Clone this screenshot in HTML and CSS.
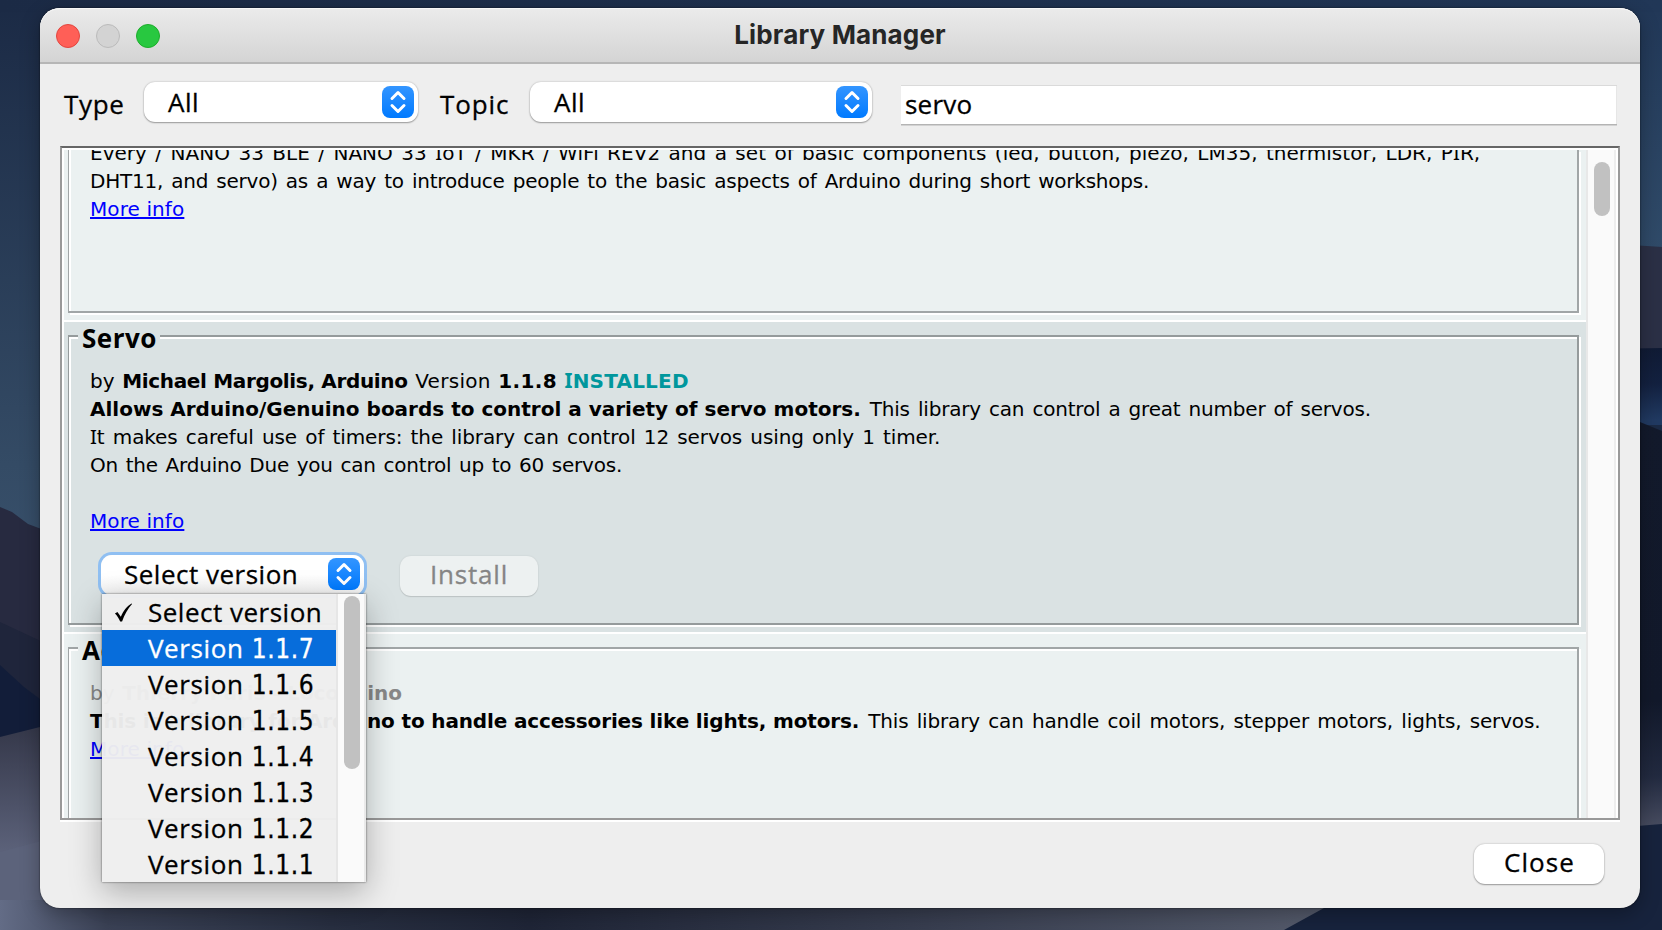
FILE: index.html
```html
<!DOCTYPE html>
<html lang="en">
<head>
<meta charset="utf-8">
<title>Library Manager</title>
<link rel="stylesheet" href="styles.css">
</head>
<body>
<svg class="wallpaper" viewBox="0 0 1662 930" preserveAspectRatio="none" aria-hidden="true">
  <defs>
    <linearGradient id="sky" x1="0" y1="0" x2="0" y2="1">
      <stop offset="0" stop-color="#1b2a45"/><stop offset=".5" stop-color="#344b65"/><stop offset="1" stop-color="#476280"/>
    </linearGradient>
    <linearGradient id="skyRight" x1="0" y1="0" x2="0" y2="1">
      <stop offset="0" stop-color="#213757"/><stop offset="1" stop-color="#304b69"/>
    </linearGradient>
    <linearGradient id="skyTop" x1="0" y1="0" x2="1" y2="0">
      <stop offset="0" stop-color="#1b2a45"/><stop offset="1" stop-color="#213757"/>
    </linearGradient>
    <linearGradient id="dune" x1="0" y1="725" x2="0" y2="850" gradientUnits="userSpaceOnUse">
      <stop offset="0" stop-color="#343749"/><stop offset="1" stop-color="#5b6179"/>
    </linearGradient>
    <linearGradient id="floor" x1="0" y1="0" x2="1324" y2="0" gradientUnits="userSpaceOnUse">
      <stop offset="0" stop-color="#636c86"/><stop offset=".08" stop-color="#3b4256"/><stop offset=".25" stop-color="#282f41"/>
      <stop offset=".4" stop-color="#1f2537"/><stop offset=".7" stop-color="#383e50"/><stop offset="1" stop-color="#555b6c"/>
    </linearGradient>
    <linearGradient id="navy" x1="0" y1="348" x2="0" y2="420" gradientUnits="userSpaceOnUse">
      <stop offset="0" stop-color="#101b35"/><stop offset=".5" stop-color="#132140"/><stop offset="1" stop-color="#213a62"/>
    </linearGradient>
    <linearGradient id="shade" x1="0" y1="410" x2="0" y2="826" gradientUnits="userSpaceOnUse">
      <stop offset="0" stop-color="#131a2c"/><stop offset=".7" stop-color="#12192b"/><stop offset=".88" stop-color="#222a40"/><stop offset="1" stop-color="#474c60"/>
    </linearGradient>
  </defs>
  <rect width="831" height="930" fill="url(#sky)"/>
  <rect x="831" width="831" height="250" fill="url(#skyRight)"/>
  <rect width="1662" height="12" fill="url(#skyTop)"/>
  <path d="M0 507L12 512 28 524 60 536V930H0Z" fill="#272a40"/>
  <path d="M0 622L60 650V930H0Z" fill="#1f253b"/>
  <path d="M0 665L24 687 60 714V930H0Z" fill="#121d39"/>
  <path d="M0 737L60 722V930H0Z" fill="url(#dune)"/>
  <path d="M0 852L60 836V930H0Z" fill="#5c647c" opacity=".7"/>
  <rect y="900" width="1340" height="30" fill="url(#floor)"/>
  <path d="M1600 243L1662 247V350H1600Z" fill="#2b3046"/>
  <path d="M1600 349L1662 348V425H1600Z" fill="url(#navy)"/>
  <path d="M1600 408L1640 422 1662 431V830H1600Z" fill="url(#shade)"/>
  <path d="M1600 829L1662 824V930H1284L1324 908 1340 900H1600Z" fill="#17233d"/>
</svg>

<main class="window">
  <header class="titlebar">
    <div class="lights"><i class="light red"></i><i class="light off"></i><i class="light green"></i></div>
    <h1 class="title">Library Manager</h1>
  </header>

  <div class="filters">
    <span class="label type">Type</span>
    <div class="combo combo-type"><span>All</span>
      <svg class="stepper" viewBox="0 0 32 32"><path d="M10 12.500L16 6.500l6 6M10 19.500L16 25.500l6-6"/></svg></div>
    <span class="label topic">Topic</span>
    <div class="combo combo-topic"><span>All</span>
      <svg class="stepper" viewBox="0 0 32 32"><path d="M10 12.500L16 6.500l6 6M10 19.500L16 25.500l6-6"/></svg></div>
    <div class="search">servo</div>
  </div>

  <section class="pane">
    <div class="list">
      <article class="item clipped">
        <div class="frame">
          <div class="desc">
            <p class="l-every">Every / NANO 33 BLE / NANO 33 <span class="si">I</span>oT / MKR / WiFi REV2 and a set of basic components (led, button, piezo, LM35, thermistor, LDR, P<span class="si">I</span>R,</p>
            <p class="l-dht">DHT11, and servo) as a way to introduce people to the basic aspects of Arduino during short workshops.</p>
            <p><a>More info</a></p>
          </div>
        </div>
      </article>
      <article class="item selected">
        <div class="frame">
          <h2>Servo</h2>
          <div class="desc">
            <p class="byline">by <b class="author">Michael Margolis, Arduino</b> <span class="ver">Version</span> <b class="num">1.1.8</b> <b class="installed"><span class="si">I</span>NSTALLED</b></p>
            <p><b class="lead">Allows Arduino/Genuino boards to control a variety of servo motors.</b> <span class="tail">This library can control a great number of servos.</span></p>
            <p class="l-it"><span class="si">I</span>t makes careful use of timers: the library can control 12 servos using only 1 timer.</p>
            <p class="l-on">On the Arduino Due you can control up to 60 servos.</p>
            <p>&nbsp;</p>
            <p><a>More info</a></p>
          </div>
          <div class="actions">
            <div class="combo combo-version"><span>Select version</span>
              <svg class="stepper" viewBox="0 0 32 32"><path d="M10 12.500L16 6.500l6 6M10 19.500L16 25.500l6-6"/></svg></div>
            <div class="button install">Install</div>
          </div>
        </div>
      </article>
      <article class="item">
        <div class="frame">
          <h2>Accessories</h2>
          <div class="desc">
            <p class="byline muted">by <b class="author loco">Thierry Paris - Locoduino</b></p>
            <p><b class="lead3">This is a library for Arduino to handle accessories like lights, motors.</b> <span class="tail tail3">This library can handle coil motors, stepper motors, lights, servos.</span></p>
            <p><a>More info</a></p>
          </div>
        </div>
      </article>
    </div>
    <div class="scrollbar"><div class="thumb"></div></div>
  </section>

  <footer class="footer"><div class="button close">Close</div></footer>

  <div class="popup">
    <ul class="options">
      <li class="checked"><svg class="check" viewBox="0 0 20 20"><path d="M1 11L3.600 9.500 7.200 14.500C10 8 13 4 18.500.5L19 1C14.500 6 11 12 8.500 19.500H6.500C5 16 3.500 13.500 1 11Z"/></svg>Select version</li>
      <li class="active">Version <span class="digits">1.1.7</span></li>
      <li>Version <span class="digits">1.1.6</span></li>
      <li>Version <span class="digits">1.1.5</span></li>
      <li>Version <span class="digits">1.1.4</span></li>
      <li>Version <span class="digits">1.1.3</span></li>
      <li>Version <span class="digits">1.1.2</span></li>
      <li>Version <span class="digits">1.1.1</span></li>
    </ul>
    <div class="popup-track"><div class="popup-thumb"></div></div>
  </div>
</main>
</body>
</html>
```
FILE: styles.css
```css
* { box-sizing: border-box; margin: 0; padding: 0; }
body {
  width: 1662px; height: 930px; overflow: hidden;
  padding: 8px 22px 22px 40px;
  background: #1b2a45;
  font: 26px "Open Sans", sans-serif;
  letter-spacing: .5px;
  color: #000;
}
.wallpaper { position: absolute; left: 0; top: 0; width: 1662px; height: 930px; }

.window {
  position: relative;
  width: 1600px; height: 900px;
  display: flex; flex-direction: column;
  background: #eee;
  border-radius: 20px;
  box-shadow: 0 0 2px rgba(0,0,0,.7), 0 6px 20px rgba(0,0,0,.3);
}

.titlebar {
  height: 56px; flex: none;
  display: grid; grid-template-columns: 150px 1fr 150px; align-items: center;
  padding: 0 16px;
  border-radius: 20px 20px 0 0;
  background: linear-gradient(#ebebeb, #d4d4d4);
  border-bottom: 2px solid #b6b6b6;
  box-shadow: inset 0 1px 0 #f6f6f6;
}
.lights { display: flex; gap: 16px; }
.light { width: 24px; height: 24px; border-radius: 50%; border: 1px solid; margin-top: 2px; }
.red { background: #ff5f57; border-color: #e2463f; }
.off { background: #d3d3d3; border-color: #bbb; }
.green { background: #28c840; border-color: #1dad2b; }
.title {
  font: bold 26px/54px Inter, sans-serif; letter-spacing: .15px;
  color: #262626; text-align: center;
}

.label, .combo span, .button, .search, .options li { -webkit-text-stroke: .3px currentColor; }

.filters { height: 82px; flex: none; display: flex; padding: 18px 23px 0 24px; }
.label { line-height: 44px; height: 44px; }
.type { width: 80px; letter-spacing: .7px; }
.topic { width: 90px; margin-left: 22px; letter-spacing: .9px; }

.combo {
  display: flex; align-items: center; justify-content: space-between;
  height: 40px; padding: 0 4px 0 24px; line-height: 40px;
  background: #fff; border-radius: 11px;
  box-shadow: 0 0 2px rgba(0,0,0,.25), 0 1px 1.500px rgba(0,0,0,.3);
}
.combo span { height: 40px; }
.combo-type { width: 274px; }
.combo-topic { width: 342px; }
.stepper {
  width: 32px; height: 32px; border-radius: 8px;
  background: linear-gradient(#3395ff, #007aff);
  fill: none; stroke: #fff; stroke-width: 3; stroke-linecap: round; stroke-linejoin: round;
}
.search {
  flex: 1; margin: 4px 0 0 29px; height: 38px; padding-left: 4px; line-height: 36px; letter-spacing: .2px;
  background: #fff; border-right: 1px solid #e6e6e6;
  box-shadow: 0 -1px 0 #dadada, 0 1px 0 #b4b4b4, 0 2px 0 #d2d2d2;
}

.pane {
  flex: none; height: 674px; margin: 0 20px;
  display: flex;
  background: #fff; padding: 2px 2px 0;
  border: 2px solid #999; border-top-color: #666;
  box-shadow: 0 2px 0 #fff;
}
.list { width: 1522px; height: 668px; overflow: hidden; }
.item {
  height: 312px; padding: 13px 7px 7px 4px;
  background: #ebf1f1; border-bottom: 2px solid #fff;
}
.item.selected { background: #dae2e3; }
.item.clipped { height: 172px; padding-top: 0; }
.frame {
  display: flow-root;
  height: 290px;
  border: 2px solid #a1a6a7; border-left-width: 1px;
  box-shadow: 2px 2px 0 #fff, inset 2px 2px 0 #fff;
}
.selected .frame { border-color: #959b9c; }
.clipped .frame { height: 163px; border-top: 0; box-shadow: 2px 2px 0 #fff, inset 2px 0 0 #fff; }
.frame h2 {
  width: max-content; height: 30px; line-height: 28px;
  margin: -13px 0 13px 9px; padding: 0 3px 0 4px;
  font-size: 26px; letter-spacing: .5px; background: #ebf1f1;
}
.selected h2 { background: #dae2e3; }

.desc { padding-left: 21px; font-family: "DejaVu Sans", sans-serif; font-size: 20px; line-height: 28px; letter-spacing: .1px; white-space: nowrap; }
.clipped .desc { margin-top: -11px; }
.desc p { height: 28px; }
.si { font-family: "Noto Sans", sans-serif; font-size: 20.500px; line-height: 1; }
.desc a { color: #0000ff; text-decoration: underline; text-decoration-thickness: 2px; text-underline-offset: 1px; }
.byline { word-spacing: 1px; }
.author { letter-spacing: -.34px; word-spacing: 0; }
.loco { letter-spacing: -.09px; }
.ver { letter-spacing: .3px; }
.num { letter-spacing: .35px; }
.lead { letter-spacing: 0; }
.lead3 { letter-spacing: -.15px; }
.tail { margin-left: 2.500px; letter-spacing: -.21px; word-spacing: 2px; }
.tail3 { letter-spacing: -.14px; }
.l-every { letter-spacing: .03px; word-spacing: 2px; }
.l-dht { letter-spacing: -.23px; word-spacing: 2px; }
.l-it { letter-spacing: -.11px; word-spacing: 2px; }
.l-on { letter-spacing: -.2px; word-spacing: 1.500px; }
.installed { color: #00979d; letter-spacing: .2px; }
.muted { color: #888; }

.actions { display: flex; gap: 36px; padding: 20px 0 0 32px; }
.combo-version {
  width: 263px; padding-left: 23px; line-height: 38px;
  background: linear-gradient(#fff 50%, #f0f0f0);
  box-shadow: 0 0 0 3px #8fbff2;
}
.combo-version .stepper { margin-top: -2px; }
.button {
  height: 40px; line-height: 36px; border-radius: 11px; text-align: center; background: #fff;
  box-shadow: 0 0 2px rgba(0,0,0,.25), 0 1px 1.500px rgba(0,0,0,.3);
}
.install { width: 138px; margin-top: 1px; letter-spacing: .8px; background: #edf1f1; color: #858585; box-shadow: 0 0 2px rgba(0,0,0,.1), 0 1px 1px rgba(0,0,0,.12); }

.scrollbar {
  width: 30px; padding: 12px 0 0 6px; background: #fafafa;
  border-left: 2px solid #e8e8e8; border-right: 2px solid #ededed;
}
.thumb { width: 16px; height: 54px; border-radius: 8px; background: #c1c1c1; }

.footer { display: flex; justify-content: flex-end; padding: 24px 36px 0 0; }
.close { width: 130px; padding-left: 1px; letter-spacing: 1.1px; }

.popup {
  position: absolute; left: 62px; top: 586px; width: 264px; height: 288px;
  display: flex;
  background: rgba(238,238,238,.97);
  box-shadow: 0 0 2px rgba(0,0,0,.6), 0 10px 30px rgba(0,0,0,.28);
}
.options { width: 234px; list-style: none; letter-spacing: .6px; }
.options li { position: relative; height: 36px; line-height: 36px; padding-left: 46px; }
.options .checked { letter-spacing: .5px; }
.options .active { background: #076ddb; color: #fff; }
.digits { margin-left: 1px; font-family: "DejaVu Sans Condensed", "DejaVu Sans", sans-serif; line-height: 1; letter-spacing: .6px; }
.check { position: absolute; left: 12px; top: 9px; width: 19px; height: 19px; }
.popup-track {
  width: 30px; padding: 2px 0 0 6px; background: rgba(250,250,250,.97);
  border-left: 2px solid #e6e6e6; border-right: 2px solid #eaeaea;
}
.popup-thumb { width: 16px; height: 173px; border-radius: 8px; background: #c1c1c1; }
```
